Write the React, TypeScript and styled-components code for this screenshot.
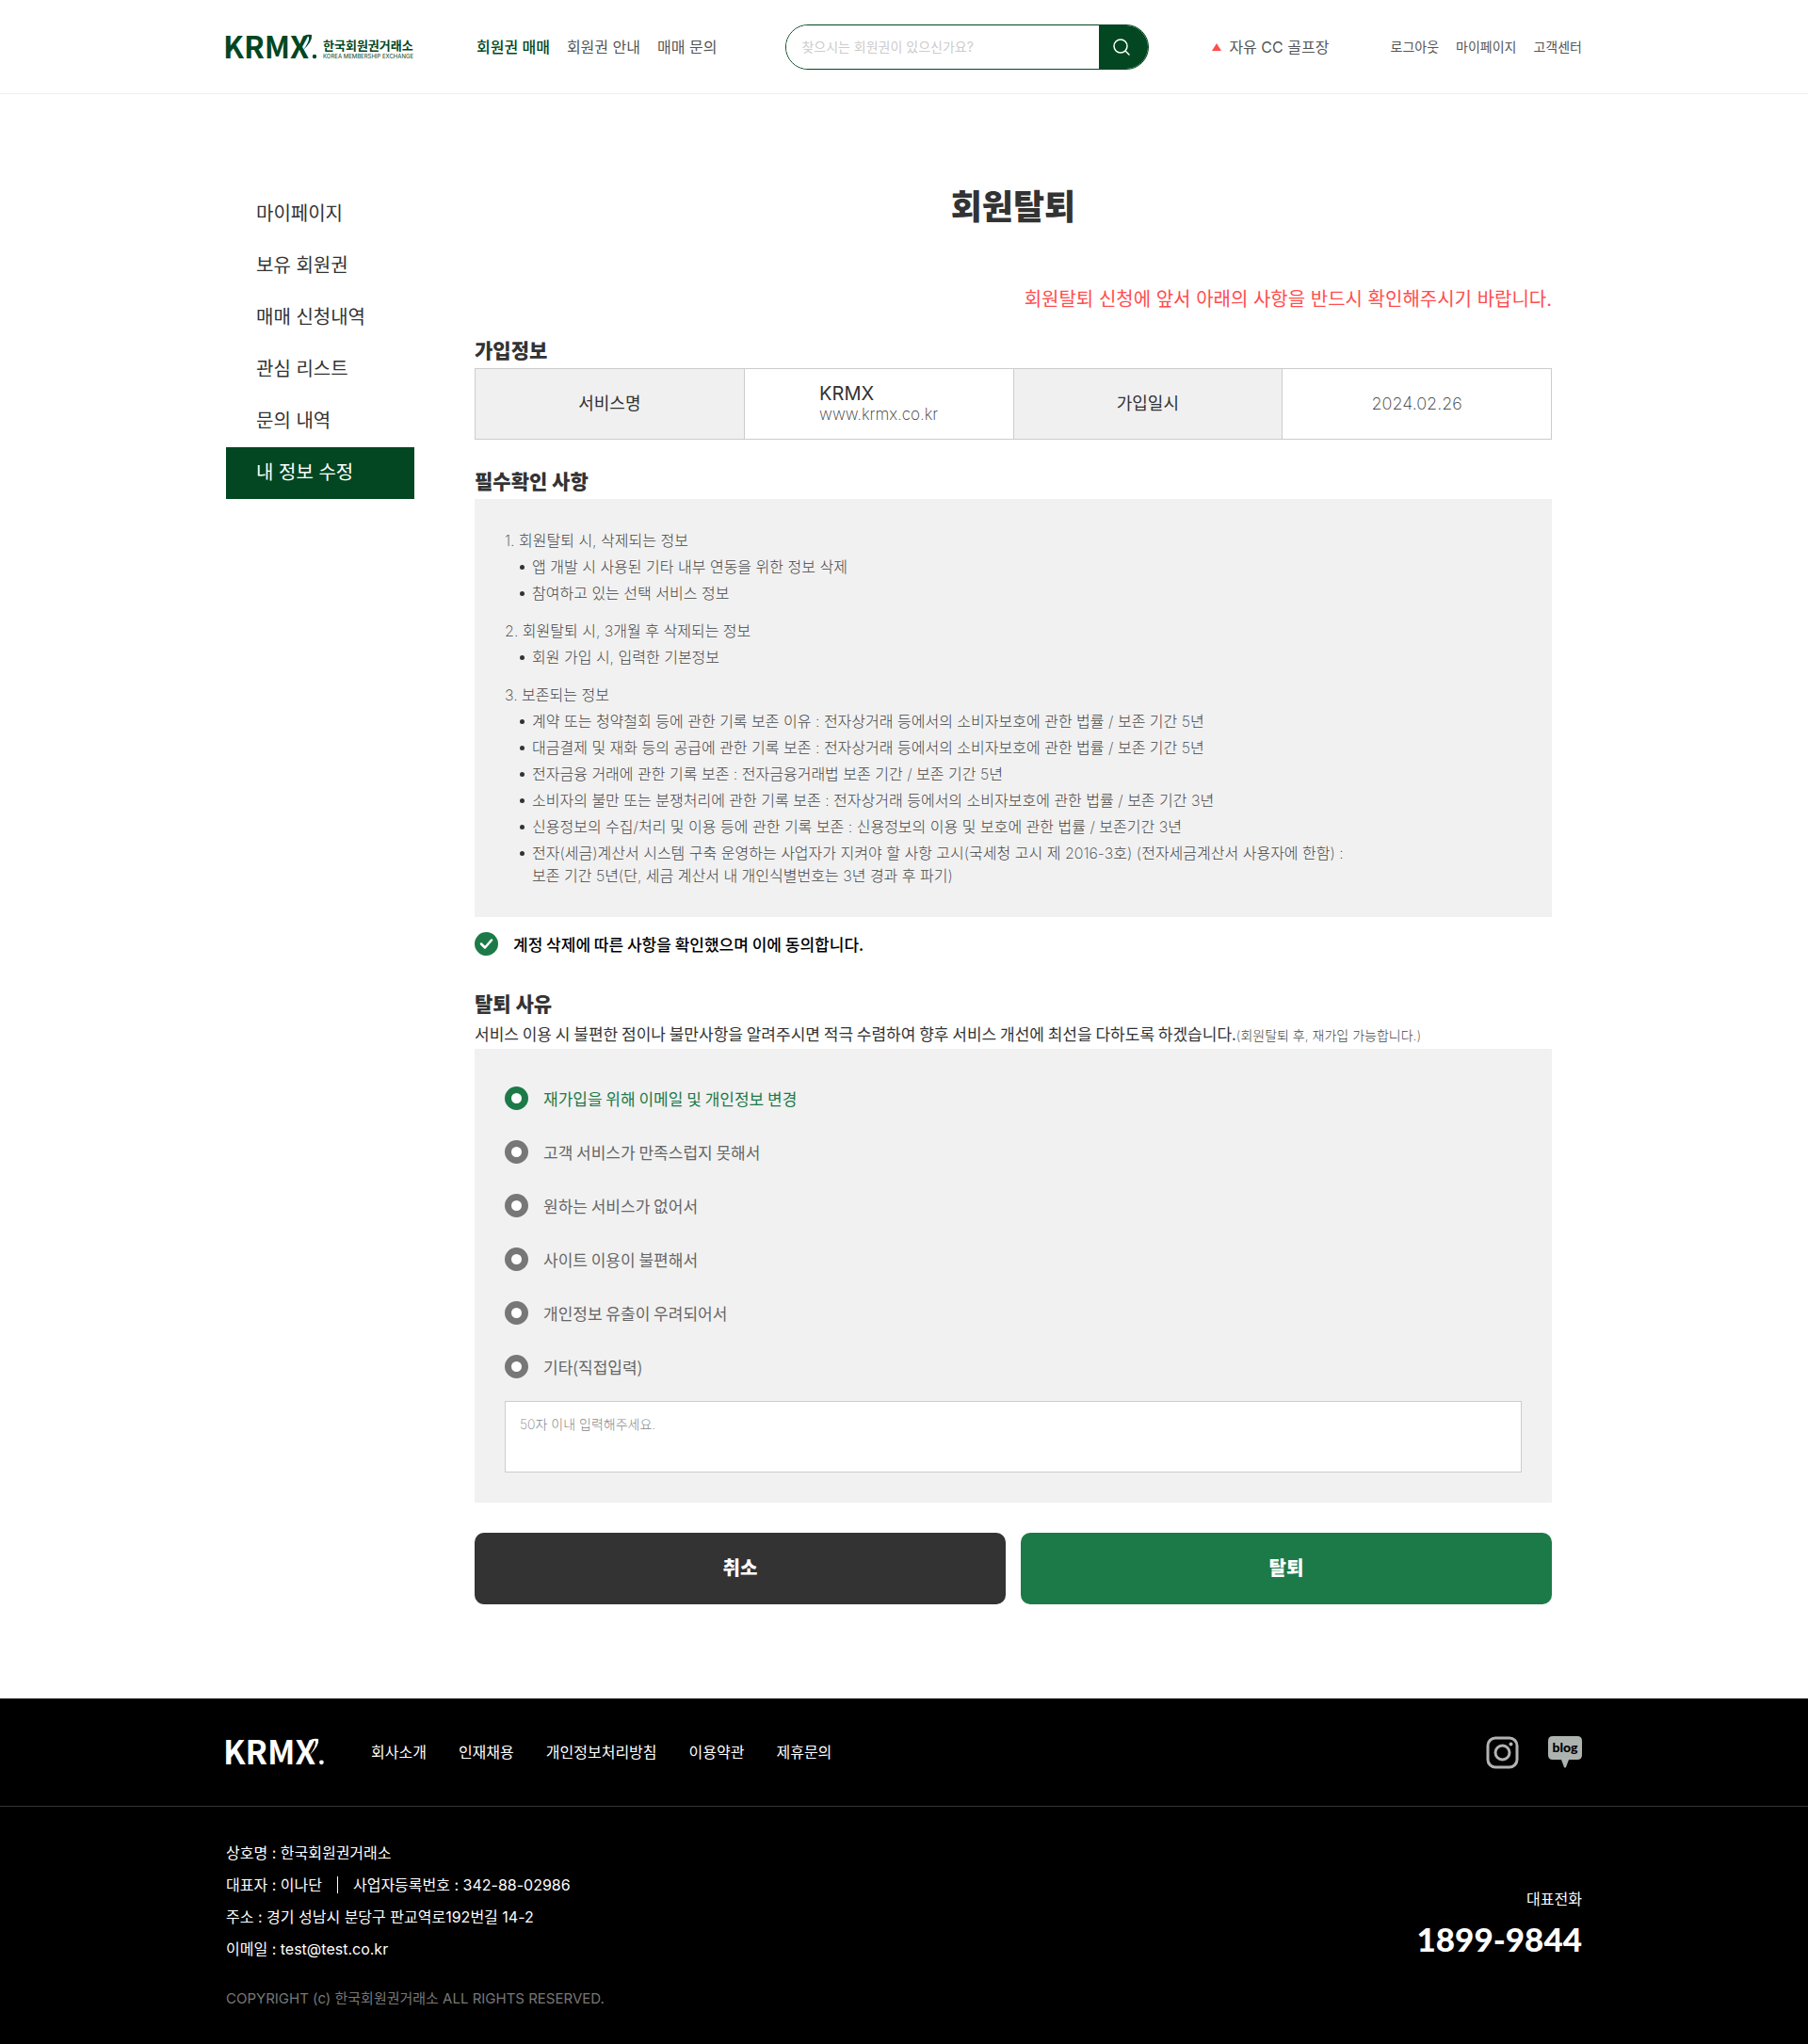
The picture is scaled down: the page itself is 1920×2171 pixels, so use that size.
import React, { useState } from 'react';
import styled, { createGlobalStyle } from 'styled-components';

const mixed = `Inter, "Noto Sans CJK KR", sans-serif`;
const hangul = `"Noto Sans CJK KR", sans-serif`;

const color = {
  forest: '#024721',
  green: '#1c7a49',
  ink: '#333333',
  gray: '#777777',
  panel: '#f1f1f1',
  line: '#cccccc',
};

const GlobalStyle = createGlobalStyle`
  *, *::before, *::after { box-sizing: border-box; }
  body { margin: 0; background: #fff; color: ${color.ink}; font-family: ${mixed}; font-size: 16px; line-height: 24px; }
  h1, h2, p, ul, ol, dl, dd, fieldset { margin: 0; padding: 0; border: 0; }
  ul, ol { list-style: none; }
  a { color: inherit; text-decoration: none; }
  button, input, textarea { font: inherit; }
  button { cursor: pointer; }
`;

const Container = styled.div`
  display: flex;
  width: 100%;
  max-width: 1504px;
  margin: 0 auto;
  padding: 0 32px;
`;

/* ---------- header ---------- */

const Header = styled.header`
  border-bottom: 1px solid #eeeeee;
`;

const HeaderRow = styled(Container)`
  align-items: center;
  height: 99px;
`;

const LogoLink = styled.a<{ $gap: number }>`
  display: flex;
  flex: none;
  margin-right: ${(p) => p.$gap}px;
`;

const LogoSvg = styled.svg`
  display: block;
  overflow: visible;
`;

const MainNav = styled.nav`
  display: flex;
  gap: 18px;
  white-space: nowrap;
`;

const MainLink = styled.a<{ $active?: boolean }>`
  color: ${(p) => (p.$active ? color.forest : '#555555')};
  font-weight: ${(p) => (p.$active ? 500 : 400)};
`;

const SearchForm = styled.form`
  display: flex;
  width: 386px;
  height: 48px;
  margin-left: 73px;
  border: 1px solid ${color.forest};
  border-radius: 24px;
  overflow: hidden;
`;

const SearchInput = styled.input`
  flex: 1;
  min-width: 0;
  padding: 0 16px;
  border: 0;
  outline: 0;
  background: #fff;
  font-size: 14px;
  &::placeholder { color: #cccccc; opacity: 1; }
`;

const SearchButton = styled.button`
  display: grid;
  place-items: center;
  width: 52px;
  padding: 0 4px 0 0;
  border: 0;
  background: ${color.forest};
`;

const Ticker = styled.a`
  display: flex;
  align-items: center;
  gap: 8px;
  margin-left: 67px;
  color: #555555;
  white-space: nowrap;
`;

const Rise = styled.span`
  width: 0;
  height: 0;
  border: solid transparent;
  border-width: 0 5px 8px;
  border-bottom-color: #ff4d4d;
`;

const UserNav = styled.nav`
  display: flex;
  gap: 18px;
  margin-left: auto;
  color: #555555;
  font-size: 14px;
  white-space: nowrap;
`;

/* ---------- page body ---------- */

const Body = styled(Container)`
  gap: 64px;
  padding-top: 100px;
  padding-bottom: 100px;
`;

const Sidebar = styled.nav`
  flex: none;
  width: 200px;
`;

const SideLink = styled.a<{ $active?: boolean }>`
  display: block;
  padding: 0 32px;
  background: ${(p) => (p.$active ? color.forest : 'transparent')};
  color: ${(p) => (p.$active ? '#fff' : color.ink)};
  font-size: 20px;
  line-height: 55px;
`;

const Main = styled.main`
  flex: 1;
  min-width: 0;
  margin-right: 32px;
`;

const Title = styled.h1`
  font-size: 36px;
  font-weight: 900;
  line-height: 40px;
  text-align: center;
`;

const Warning = styled.p`
  margin-top: 64px;
  color: #ff4d4d;
  font-size: 20px;
  line-height: 28px;
  text-align: right;
`;

const SectionTitle = styled.h2<{ $top: number }>`
  margin-top: ${(p) => p.$top}px;
  padding-bottom: 4px;
  font-family: ${hangul};
  font-size: 21px;
  font-weight: 900;
  line-height: 32px;
`;

const InfoTable = styled.table`
  width: 100%;
  height: 76px;
  border-collapse: collapse;
  table-layout: fixed;
  font-size: 18px;
  th, td { padding: 0; border: 1px solid ${color.line}; text-align: center; }
  th { background: #f0f0f0; font-weight: 400; }
  td { font-weight: 200; }
`;

const Service = styled.span`
  display: inline-block;
  font-size: 17px;
  line-height: 22px;
  text-align: left;
  strong { display: block; font-size: 20px; font-weight: 400; }
`;

const Panel = styled.div`
  padding: 32px;
  background: ${color.panel};
`;

const Terms = styled.ol`
  display: grid;
  gap: 16px;
  color: #444444;
  font-weight: 200;
`;

const TermList = styled.ul`
  display: grid;
  gap: 4px;
  margin-top: 4px;
  padding-left: 16px;
`;

const Term = styled.li`
  display: flex;
  gap: 8px;
  &::before {
    content: '';
    flex: none;
    width: 5px;
    height: 5px;
    margin-top: 10px;
    border-radius: 50%;
    background: ${color.ink};
  }
`;

const Choice = styled.label`
  display: flex;
  align-items: center;
  gap: 16px;
  width: fit-content;
  padding: 8px 0;
  color: #666666;
  font-family: ${hangul};
  font-size: 17px;
  line-height: 25px;
  &:has(input:checked) { color: ${color.green}; }
`;

const Agree = styled(Choice)`
  margin-top: 8px;
  font-weight: 500;
  &, &:has(input:checked) { color: #000; }
`;

const CheckWrap = styled.span`
  display: grid;
  flex: none;
  > * { grid-area: 1 / 1; }
  svg { pointer-events: none; }
`;

const CheckInput = styled.input`
  appearance: none;
  width: 25px;
  height: 25px;
  margin: 0;
  border-radius: 50%;
  background: ${color.gray};
  &:checked { background: ${color.green}; }
`;

const RadioInput = styled.input`
  appearance: none;
  flex: none;
  width: 25px;
  height: 25px;
  margin: 0;
  border: 7px solid ${color.gray};
  border-radius: 50%;
  background: #fff;
  &:checked { border-color: ${color.green}; }
`;

const Guide = styled.p`
  padding-bottom: 4px;
  font-family: ${hangul};
  font-size: 17px;
  line-height: 25px;
  small { color: #444444; font-family: ${mixed}; font-size: 14px; font-weight: 200; line-height: 14px; }
`;

const Reasons = styled.fieldset`
  display: grid;
  gap: 16px;
`;

const Detail = styled.textarea`
  display: block;
  width: 100%;
  height: 76px;
  padding: 12px 15px;
  border: 1px solid ${color.line};
  outline: 0;
  background: #fff;
  font-size: 14px;
  font-weight: 200;
  resize: none;
  &::placeholder { color: #888888; opacity: 1; }
`;

const Actions = styled.div`
  display: grid;
  grid-template-columns: 1fr 1fr;
  gap: 16px;
  margin-top: 32px;
`;

const ActionButton = styled.button<{ $tone: string }>`
  height: 76px;
  border: 0;
  border-radius: 10px;
  background: ${(p) => p.$tone};
  color: #fff;
  font-size: 20px;
  font-weight: 900;
`;

/* ---------- footer ---------- */

const Footer = styled.footer`
  background: #000;
  color: #fff;
`;

const FooterTop = styled.div`
  border-bottom: 1px solid #333333;
`;

const FooterRow = styled(Container)`
  align-items: center;
  height: 114px;
`;

const FooterNav = styled.nav`
  display: flex;
  gap: 34px;
`;

const Social = styled.div`
  display: flex;
  align-items: center;
  gap: 31px;
  margin-left: auto;
  a { display: flex; }
`;

const FooterInfo = styled(Container)`
  align-items: center;
  justify-content: space-between;
  padding-top: 32px;
  padding-bottom: 36px;
`;

const Company = styled.div`
  line-height: 34px;
`;

const Split = styled.p`
  display: flex;
  align-items: center;
  gap: 16px;
`;

const Bar = styled.span`
  width: 1px;
  height: 18px;
  background: #fff;
`;

const Copyright = styled.p`
  margin-top: 24px;
  color: #777777;
  font-size: 15px;
  line-height: 24px;
`;

const Phone = styled.div`
  padding-top: 8px;
  text-align: right;
  strong { display: block; font-family: Lato, sans-serif; font-size: 35px; font-weight: 900; line-height: 60px; }
`;

/* ---------- logo ---------- */

function Wordmark({ fill }: { fill: string }) {
  return (
    <>
      <text x="-3" y="25" fontFamily='"Noto Sans CJK KR", sans-serif' fontSize="32" fontWeight="700" fill={fill}>KRMX</text>
      <path d="M83 1 Q87 -1 91 0 Q92 7 82 16 Q89 7 88 2 Q86 1 83 1Z" fill={fill} />
      <circle cx="94" cy="23" r="2.2" fill={fill} />
    </>
  );
}

function HeaderLogo() {
  return (
    <LogoSvg width="200" height="26" viewBox="0 0 200 26" role="img" aria-label="KRMX 한국회원권거래소">
      <Wordmark fill={color.forest} />
      <text x="103" y="16" fontFamily='"Noto Sans CJK KR", sans-serif' fontSize="13" fontWeight="700" fill={color.forest}>한국회원권거래소</text>
      <text x="103" y="25" fontFamily="Inter, sans-serif" fontSize="6" fill={color.forest}>KOREA MEMBERSHIP EXCHANGE</text>
    </LogoSvg>
  );
}

/* ---------- data ---------- */

const sideItems = ['마이페이지', '보유 회원권', '매매 신청내역', '관심 리스트', '문의 내역', '내 정보 수정'];

const terms = [
  { title: '1. 회원탈퇴 시, 삭제되는 정보', items: ['앱 개발 시 사용된 기타 내부 연동을 위한 정보 삭제', '참여하고 있는 선택 서비스 정보'] },
  { title: '2. 회원탈퇴 시, 3개월 후 삭제되는 정보', items: ['회원 가입 시, 입력한 기본정보'] },
  {
    title: '3. 보존되는 정보',
    items: [
      '계약 또는 청약철회 등에 관한 기록 보존 이유 : 전자상거래 등에서의 소비자보호에 관한 법률 / 보존 기간 5년',
      '대금결제 및 재화 등의 공급에 관한 기록 보존 : 전자상거래 등에서의 소비자보호에 관한 법률 / 보존 기간 5년',
      '전자금융 거래에 관한 기록 보존 : 전자금융거래법 보존 기간 / 보존 기간 5년',
      '소비자의 불만 또는 분쟁처리에 관한 기록 보존 : 전자상거래 등에서의 소비자보호에 관한 법률 / 보존 기간 3년',
      '신용정보의 수집/처리 및 이용 등에 관한 기록 보존 : 신용정보의 이용 및 보호에 관한 법률 / 보존기간 3년',
      <span key="tax">
        전자(세금)계산서 시스템 구축 운영하는 사업자가 지켜야 할 사항 고시(국세청 고시 제 2016-3호) (전자세금계산서 사용자에 한함) :<br />
        보존 기간 5년(단, 세금 계산서 내 개인식별번호는 3년 경과 후 파기)
      </span>,
    ],
  },
];

const reasons = [
  '재가입을 위해 이메일 및 개인정보 변경',
  '고객 서비스가 만족스럽지 못해서',
  '원하는 서비스가 없어서',
  '사이트 이용이 불편해서',
  '개인정보 유출이 우려되어서',
  '기타(직접입력)',
];

const footerLinks = ['회사소개', '인재채용', '개인정보처리방침', '이용약관', '제휴문의'];

export default function App() {
  const [agreed, setAgreed] = useState(true);
  const [reason, setReason] = useState(0);

  return (
    <>
      <GlobalStyle />
      <Header>
        <HeaderRow>
          <LogoLink href="#" $gap={66}><HeaderLogo /></LogoLink>
          <MainNav>
            <MainLink href="#" $active>회원권 매매</MainLink>
            <MainLink href="#">회원권 안내</MainLink>
            <MainLink href="#">매매 문의</MainLink>
          </MainNav>
          <SearchForm role="search" onSubmit={(e) => e.preventDefault()}>
            <SearchInput type="text" aria-label="회원권 검색" placeholder="찾으시는 회원권이 있으신가요?" />
            <SearchButton type="submit" aria-label="검색">
              <svg width="18" height="18" viewBox="0 0 18 18" fill="none" stroke="#fff" strokeWidth="1.5" strokeLinecap="round">
                <circle cx="8" cy="8" r="7" />
                <path d="M13 13l4 4" />
              </svg>
            </SearchButton>
          </SearchForm>
          <Ticker href="#"><Rise />자유 CC 골프장</Ticker>
          <UserNav>
            <a href="#">로그아웃</a>
            <a href="#">마이페이지</a>
            <a href="#">고객센터</a>
          </UserNav>
        </HeaderRow>
      </Header>

      <Body>
        <Sidebar>
          {sideItems.map((item, i) => (
            <SideLink key={item} href="#" $active={i === 5}>{item}</SideLink>
          ))}
        </Sidebar>

        <Main>
          <Title>회원탈퇴</Title>
          <Warning>회원탈퇴 신청에 앞서 아래의 사항을 반드시 확인해주시기 바랍니다.</Warning>

          <SectionTitle $top={23}>가입정보</SectionTitle>
          <InfoTable>
            <tbody>
              <tr>
                <th scope="row">서비스명</th>
                <td><Service><strong>KRMX</strong>www.krmx.co.kr</Service></td>
                <th scope="row">가입일시</th>
                <td>2024.02.26</td>
              </tr>
            </tbody>
          </InfoTable>

          <SectionTitle $top={27}>필수확인 사항</SectionTitle>
          <Panel>
            <Terms>
              {terms.map((group) => (
                <li key={group.title}>
                  {group.title}
                  <TermList>
                    {group.items.map((item, i) => <Term key={i}>{item}</Term>)}
                  </TermList>
                </li>
              ))}
            </Terms>
          </Panel>
          <Agree>
            <CheckWrap>
              <CheckInput type="checkbox" checked={agreed} onChange={(e) => setAgreed(e.target.checked)} />
              <svg width="25" height="25" viewBox="0 0 25 25" fill="none" stroke="#fff" strokeWidth="2.5" strokeLinecap="round" strokeLinejoin="round">
                <path d="M7 12.5l4 4 7-8" />
              </svg>
            </CheckWrap>
            계정 삭제에 따른 사항을 확인했으며 이에 동의합니다.
          </Agree>

          <SectionTitle $top={26}>탈퇴 사유</SectionTitle>
          <Guide>
            서비스 이용 시 불편한 점이나 불만사항을 알려주시면 적극 수렴하여 향후 서비스 개선에 최선을 다하도록 하겠습니다.
            <small>(회원탈퇴 후, 재가입 가능합니다.)</small>
          </Guide>
          <Panel>
            <Reasons aria-label="탈퇴 사유">
              {reasons.map((text, i) => (
                <Choice key={text}>
                  <RadioInput type="radio" name="reason" checked={reason === i} onChange={() => setReason(i)} />
                  {text}
                </Choice>
              ))}
              <Detail aria-label="기타 사유" maxLength={50} placeholder="50자 이내 입력해주세요." />
            </Reasons>
          </Panel>

          <Actions>
            <ActionButton type="button" $tone={color.ink}>취소</ActionButton>
            <ActionButton type="button" $tone={color.green}>탈퇴</ActionButton>
          </Actions>
        </Main>
      </Body>

      <Footer>
        <FooterTop>
          <FooterRow>
            <LogoLink href="#" $gap={47}>
              <LogoSvg width="107" height="28" viewBox="0 0 99 26" role="img" aria-label="KRMX">
                <Wordmark fill="#fff" />
              </LogoSvg>
            </LogoLink>
            <FooterNav>
              {footerLinks.map((item) => <a key={item} href="#">{item}</a>)}
            </FooterNav>
            <Social>
              <a href="#" aria-label="Instagram">
                <svg width="35" height="35" viewBox="0 0 35 35" fill="none" stroke="#b3b3b3" strokeWidth="3">
                  <rect x="2" y="2" width="31" height="31" rx="8" />
                  <circle cx="17.5" cy="17.5" r="7.5" />
                  <circle cx="26.5" cy="8.5" r="2" fill="#b3b3b3" stroke="none" />
                </svg>
              </a>
              <a href="#" aria-label="blog">
                <svg width="36" height="34" viewBox="0 0 36 34">
                  <path d="M5 0h26q5 0 5 5v15q0 5-5 5h-9l-3 8q-1 1-2 0l-3-8H5q-5 0-5-5V5q0-5 5-5z" fill="#adb3ae" />
                  <text x="18" y="17" textAnchor="middle" fontFamily="Lato, sans-serif" fontSize="14" fontWeight="900" fill="#000">blog</text>
                </svg>
              </a>
            </Social>
          </FooterRow>
        </FooterTop>
        <FooterInfo>
          <Company>
            <p>상호명 : 한국회원권거래소</p>
            <Split>대표자 : 이나단<Bar />사업자등록번호 : 342-88-02986</Split>
            <p>주소 : 경기 성남시 분당구 판교역로192번길 14-2</p>
            <p>이메일 : test@test.co.kr</p>
            <Copyright>COPYRIGHT (c) 한국회원권거래소 ALL RIGHTS RESERVED.</Copyright>
          </Company>
          <Phone>
            대표전화
            <strong>1899-9844</strong>
          </Phone>
        </FooterInfo>
      </Footer>
    </>
  );
}
